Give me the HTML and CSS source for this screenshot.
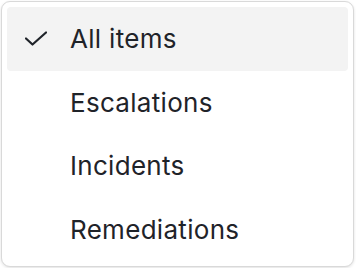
FILE: index.html
```html
<!DOCTYPE html>
<html lang="en">

<head>
    <meta charset="UTF-8">
    <meta name="viewport" content="width=device-width, initial-scale=1.0">
    <link rel="stylesheet" href="styles.css">
    <title>Filter</title>
</head>

<body>
    <div class="menu">
        <div class="item selected">
            <span class="mark">
                <svg width="22" height="16" viewBox="0 0 22 16">
                    <polyline points="1,7.5 7.5,13.5 21,1.5" fill="none" stroke="#1f2329" stroke-width="2.2" stroke-linecap="round" stroke-linejoin="round" />
                </svg>
            </span>
            <span class="label">All items</span>
        </div>
        <div class="item">
            <span class="mark"></span>
            <span class="label">Escalations</span>
        </div>
        <div class="item">
            <span class="mark"></span>
            <span class="label">Incidents</span>
        </div>
        <div class="item">
            <span class="mark"></span>
            <span class="label">Remediations</span>
        </div>
    </div>
</body>

</html>
```

FILE: styles.css
```css
* {
    margin: 0;
    padding: 0;
    box-sizing: border-box;
}

body {
    background: #ffffff;
    font-family: Inter, "Liberation Sans", Arial, sans-serif;
    color: #1f2329;
}

.menu {
    width: 353px;
    margin: 1px;
    padding: 5px;
    border: 1px solid #d9d9d9;
    border-radius: 9px;
    background: #ffffff;
    box-shadow: 0 1px 3px rgba(0, 0, 0, 0.12);
}

.item {
    display: flex;
    align-items: center;
    height: 63.5px;
    border-radius: 4px;
    cursor: pointer;
}

.item.selected {
    background: #f3f3f3;
}

.mark {
    display: flex;
    align-items: center;
    width: 63px;
    padding-left: 18px;
}

.label {
    font-size: 26px;
    letter-spacing: 0.3px;
}
```
